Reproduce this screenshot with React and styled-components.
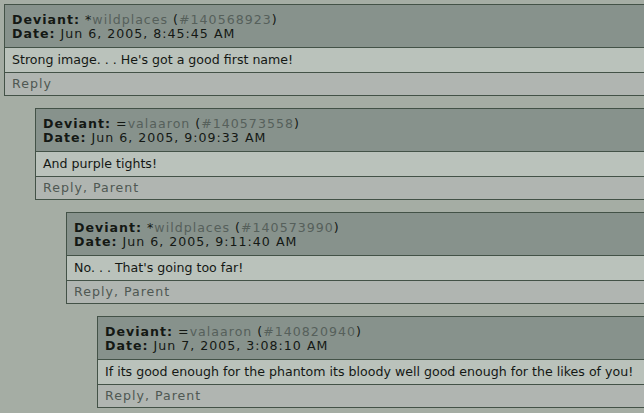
import React from 'react'
import styled, { createGlobalStyle } from 'styled-components'

const GlobalStyle = createGlobalStyle`
  html, body {
    margin: 0;
    padding: 0;
    background: #a5ada4;
    overflow: hidden;
  }
  body {
    font-family: "DejaVu Sans", Verdana, sans-serif;
    font-size: 12.6px;
    color: #141814;
  }
`

const comments = [
  { depth: 0, symbol: '*', name: 'wildplaces', id: '140568923', date: 'Jun 6, 2005, 8:45:45 AM', text: "Strong image. . . He's got a good first name!", parent: false },
  { depth: 1, symbol: '=', name: 'valaaron', id: '140573558', date: 'Jun 6, 2005, 9:09:33 AM', text: 'And purple tights!', parent: true },
  { depth: 2, symbol: '*', name: 'wildplaces', id: '140573990', date: 'Jun 6, 2005, 9:11:40 AM', text: "No. . . That's going too far!", parent: true },
  { depth: 3, symbol: '=', name: 'valaaron', id: '140820940', date: 'Jun 7, 2005, 3:08:10 AM', text: 'If its good enough for the phantom its bloody well good enough for the likes of you!', parent: true },
]

function App() {
  return (
    <>
      <GlobalStyle />
      <Thread>
        {comments.map((c) => (
          <Comment key={c.id} $depth={c.depth}>
            <Header>
              <Line>
                <Label>Deviant:</Label> {c.symbol}<Link href="#">{c.name}</Link> (<Link href="#">#{c.id}</Link>)
              </Line>
              <Line>
                <Label>Date:</Label> {c.date}
              </Line>
            </Header>
            <Body>{c.text}</Body>
            <Footer>
              <Link href="#">Reply</Link>
              {c.parent && <>, <Link href="#">Parent</Link></>}
            </Footer>
          </Comment>
        ))}
      </Thread>
    </>
  )
}

const Thread = styled.div`
  display: flex;
  flex-direction: column;
  gap: 12px;
  padding: 4px 0 0 4px;
`

const Comment = styled.div`
  margin-left: ${(p) => p.$depth * 31}px;
  margin-right: -10px;
  border: 1px solid #435247;
  display: flex;
  flex-direction: column;
`

const Header = styled.div`
  background: #87928c;
  padding: 8px 7px 6px;
  border-bottom: 1px solid #435247;
  font-size: 12.6px;
  letter-spacing: 1px;
`

const Line = styled.div`
  line-height: 14px;
  white-space: nowrap;
`

const Label = styled.b`
  font-weight: bold;
`

const Link = styled.a`
  color: #56605b;
  text-decoration: none;
`

const Body = styled.div`
  background: #bac2bb;
  padding: 5px 7px;
  line-height: 14px;
  border-bottom: 1px solid #435247;
  white-space: nowrap;
`

const Footer = styled.div`
  background: #b0b5b1;
  padding: 4px 7px;
  line-height: 14px;
  letter-spacing: 1px;
  color: #4f5853;

  a {
    color: #4f5853;
  }
`

export default App
